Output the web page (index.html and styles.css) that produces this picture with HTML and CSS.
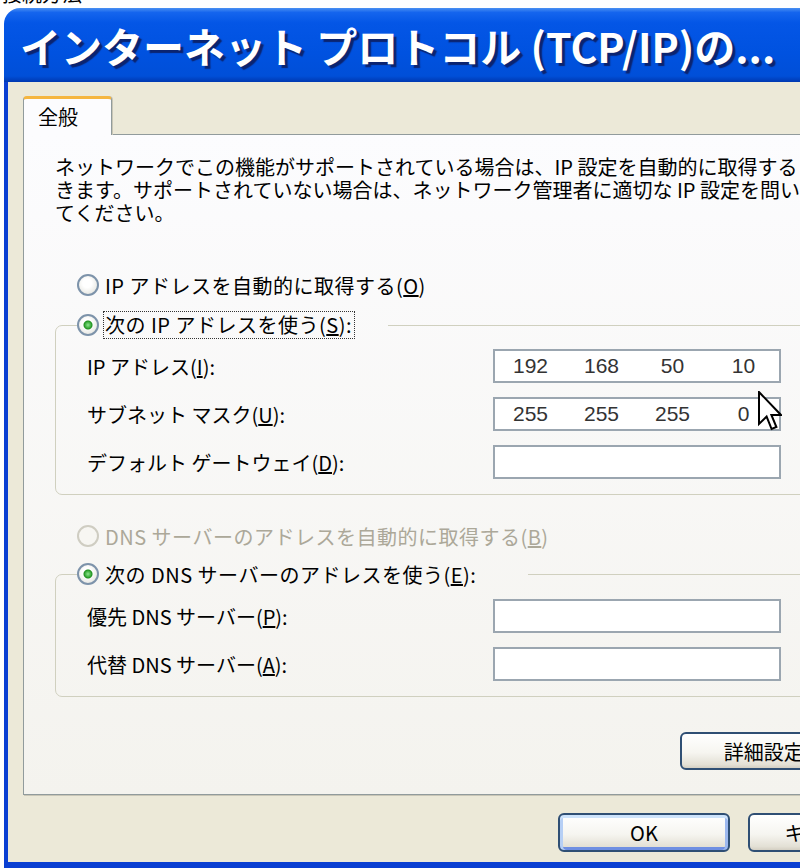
FILE: index.html
```html
<!DOCTYPE html>
<html lang="ja">
<head>
  <meta charset="UTF-8">
  <title>インターネット プロトコル (TCP/IP)のプロパティ</title>
  <link rel="stylesheet" href="styles.css">
</head>
<body>

  <div class="desk"><span>接続方法</span></div>

  <div class="window">
    <div class="titlebar">インターネット プロトコル (TCP/IP)の...</div>

    <div class="client">
      <div class="tabs">
        <div class="tab">全般</div>
      </div>

      <div class="panel">
        <p class="desc">ネットワークでこの機能がサポートされている場合は、IP 設定を自動的に取得することがで<br>きます。サポートされていない場合は、ネットワーク管理者に適切な IP 設定を問い合わせ<br>てください。</p>

        <div class="radio first"><span class="dot"></span>IP アドレスを自動的に取得する(<u>O</u>)</div>

        <fieldset class="group">
          <legend class="legend-ip">
            <span class="radio"><span class="dot on"></span><span class="focus">次の IP アドレスを使う(<u>S</u>):</span></span>
          </legend>
          <div class="fields">
            <label>IP アドレス(<u>I</u>):</label>
            <div class="ipbox"><span>192</span><span>168</span><span>50</span><span>10</span></div>
            <label>サブネット マスク(<u>U</u>):</label>
            <div class="ipbox"><span>255</span><span>255</span><span>255</span><span>0</span></div>
            <label>デフォルト ゲートウェイ(<u>D</u>):</label>
            <div class="ipbox"></div>
          </div>
        </fieldset>

        <div class="radio second disabled"><span class="dot"></span>DNS サーバーのアドレスを自動的に取得する(<u>B</u>)</div>

        <fieldset class="group dns">
          <legend class="legend-dns">
            <span class="radio"><span class="dot on"></span>次の DNS サーバーのアドレスを使う(<u>E</u>):</span>
          </legend>
          <div class="fields">
            <label>優先 DNS サーバー(<u>P</u>):</label>
            <div class="ipbox"></div>
            <label>代替 DNS サーバー(<u>A</u>):</label>
            <div class="ipbox"></div>
          </div>
        </fieldset>

        <div class="actions">
          <button class="btn advanced">詳細設定(<u>V</u>)...</button>
        </div>
      </div>

      <div class="buttons">
        <button class="btn default">OK</button>
        <button class="btn">キャンセル</button>
      </div>
    </div>

    <!-- mouse pointer over the subnet box -->
    <svg class="pointer" width="24" height="42" viewBox="0 0 12 21">
      <path d="M0.5 0.5 L0.5 16.5 L4.3 12.8 L6.8 19 L9.2 18 L6.7 12 L11.5 12 Z" fill="#fff" stroke="#000" stroke-width="1" stroke-linejoin="miter"/>
    </svg>
  </div>

</body>
</html>
```

FILE: styles.css
```css
body {
  margin: 0;
  background: #fff;
  overflow: hidden;
  font-family: "Noto Sans CJK JP", sans-serif;
  font-size: 20px;
  color: #000;
}

.desk {
  height: 8px;
  overflow: hidden;
  font-size: 20px;
  line-height: 20px;
}

.desk span {
  display: block;
  margin-top: -16px;
  padding-left: 2px;
}

.window {
  position: relative;
  margin-left: 4px;
  width: 936px;
}

.titlebar {
  height: 74px;
  box-sizing: border-box;
  padding-left: 16px;
  display: flex;
  align-items: center;
  border-radius: 16px 16px 0 0;
  background: linear-gradient(#4a90f2 0, #1565ee 6%, #0456e6 20%, #0052e0 60%, #004fd8 92%, #0038b0 100%);
  color: #fff;
  font-weight: bold;
  font-size: 41px;
  text-shadow: 3px 3px 1px #0b2470;
  white-space: nowrap;
}

.client {
  background: #ece9d8;
  border: solid #0a3fd2;
  border-width: 0 4px 6px 4px;
  padding: 14px 15px 10px 15px;
}

.tabs {
  display: flex;
}

.tab {
  position: relative;
  width: 89px;
  height: 39px;
  box-sizing: border-box;
  margin-bottom: -1px;
  padding-left: 14px;
  line-height: 36px;
  background: #fcfcfe;
  border: 1px solid #919b9c;
  border-top: 3px solid #f5b640;
  border-bottom: none;
  border-radius: 4px 4px 0 0;
  box-shadow: 1px 0 0 #c9c6b6;
}

.panel {
  border: 1px solid #919b9c;
  box-shadow: 1px 1px 0 #c9c6b6;
  background: linear-gradient(#fcfcfe, #f4f3ee);
  padding: 20px 31px 24px 31px;
}

.desc {
  margin: 0;
  line-height: 23px;
  white-space: nowrap;
}

.radio {
  display: flex;
  align-items: center;
  height: 26px;
  white-space: nowrap;
  letter-spacing: 0.5px;
}

.radio.first {
  margin: 48px 0 0 22px;
}

.radio.second {
  margin: 28px 0 0 22px;
}

.radio.disabled {
  color: #aca899;
}

.dot {
  width: 22px;
  height: 22px;
  box-sizing: border-box;
  margin-right: 6px;
  border: 2px solid #7d93aa;
  border-radius: 50%;
  background: radial-gradient(circle at 45% 40%, #fff 30%, #dcdcd4 100%);
  flex: none;
}

.dot.on {
  background:
    radial-gradient(circle at 50% 50%, #8ee48e 0, #3cad3c 3px, #1f8f1f 4px, transparent 5px),
    radial-gradient(circle at 45% 40%, #fff 30%, #dcdcd4 100%);
}

.disabled .dot {
  border-color: #cfcdc2;
  background: #f7f6f2;
}

.group {
  margin: 13px 0 0 0;
  padding: 10px 0 15px 0;
  border: 1px solid #d0d0bf;
  border-radius: 7px;
}

.group.dns {
  margin-top: 11px;
  padding-top: 11px;
}

.group legend {
  margin-left: 21px;
  padding: 0;
  box-sizing: border-box;
}

.legend-ip {
  width: 311px;
}

.legend-dns {
  width: 451px;
}

.group legend .radio {
  height: 28px;
}

.focus {
  border: 1px dotted #333;
  padding: 0 2px 0 1px;
  line-height: 26px;
  margin-left: -2px;
}

.fields {
  display: grid;
  grid-template-columns: 406px 288px;
  row-gap: 14px;
  align-items: center;
  padding-left: 31px;
}

.fields label {
  white-space: nowrap;
}

.ipbox {
  height: 34px;
  box-sizing: border-box;
  border: 2px solid #9ba6b0;
  background: #fff;
  display: flex;
  align-items: center;
  font-family: "Liberation Sans", sans-serif;
  font-size: 21px;
  color: #333;
}

.ipbox span {
  flex: 1;
  text-align: center;
}

.actions {
  display: flex;
  justify-content: flex-end;
  margin-top: 35px;
}

.btn {
  height: 38px;
  box-sizing: border-box;
  font-family: "Noto Sans CJK JP", sans-serif;
  font-size: 20px;
  color: #000;
  border: 2px solid #2f4f74;
  border-radius: 6px;
  background: linear-gradient(#fff 0%, #f6f5f0 55%, #e3e0d5 90%, #d4cfc2 100%);
  padding: 0;
}

.btn.advanced {
  width: 209px;
}

.buttons {
  display: flex;
  justify-content: flex-end;
  gap: 18px;
  margin-top: 18px;
}

.buttons .btn {
  width: 172px;
  height: 39px;
}

.buttons .btn:last-child {
  width: 173px;
}

.btn.default {
  box-shadow: inset 0 3px 0 #cde3fb, inset 3px 0 0 #b6cff5, inset -3px 0 0 #9cb8ee, inset 0 -3px 0 #6f8fe2;
}

.pointer {
  position: absolute;
  left: 754px;
  top: 383px;
}
```
